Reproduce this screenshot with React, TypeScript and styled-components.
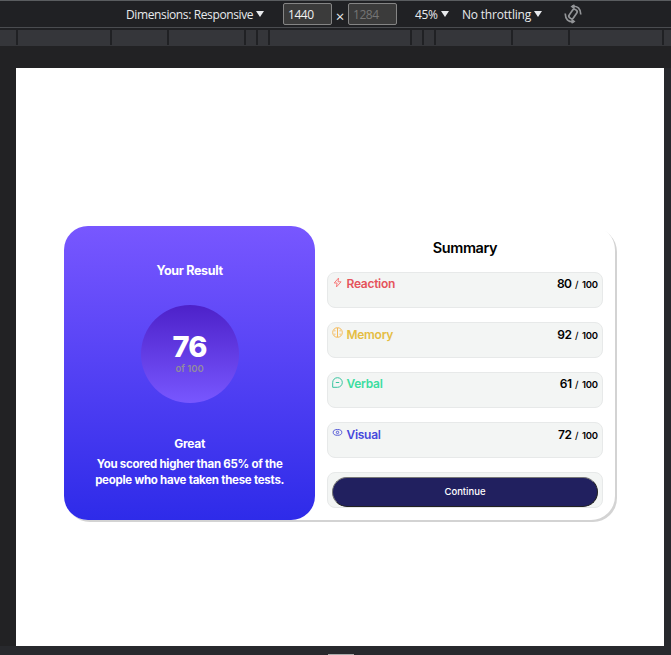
import React from "react";
import styled, { createGlobalStyle } from "styled-components";

const GlobalStyle = createGlobalStyle`
  * { box-sizing: border-box; }
  body { margin: 0; background: #202124; overflow: hidden; }
  h1, h2, h3, p { margin: 0; }
`;

const Window = styled.div`
  width: 671px;
  height: 655px;
  display: flex;
  flex-direction: column;
  background: #202124;
  font-family: Inter, "Liberation Sans", sans-serif;
`;

const Toolbar = styled.header`
  height: 28px;
  flex: none;
  display: flex;
  align-items: center;
  border-top: 1px solid #5a5d60;
  border-bottom: 1px solid #4a4c50;
  padding-left: 126px;
  color: #e8eaed;
  font: 12px/16px "Open Sans", "Noto Sans", sans-serif;
  white-space: nowrap;
`;

const Menu = styled.div<{ $width: number; $before?: number; $after?: number; $spacing: number }>`
  width: ${(p) => p.$width}px;
  margin-left: ${(p) => p.$before ?? 0}px;
  margin-right: ${(p) => p.$after ?? 0}px;
  letter-spacing: ${(p) => p.$spacing}px;
  display: flex;
  justify-content: space-between;
  align-items: center;
  padding-top: 2px;
  flex: none;
`;

const Arrow = styled.span`
  border: 4px solid transparent;
  border-top: 6px solid #e8eaed;
  border-bottom: 0;
  margin-bottom: 3px;
`;

const SizeInput = styled.input`
  width: 49px;
  height: 22px;
  padding: 1px 3px 0 4px;
  border: 1px solid #858585;
  border-radius: 2px;
  background: #3b3b3b;
  color: #f1f1f1;
  font: 12px "Open Sans", "Noto Sans", sans-serif;
  letter-spacing: -0.45px;
  &:disabled { color: #757575; }
`;

const Times = styled.span`
  width: 16px;
  padding: 4px 0 0;
  text-align: center;
  font-size: 15px;
`;

const RotateIcon = styled.svg`
  width: 20px;
  height: 20px;
  margin-left: 21px;
`;

const Ruler = styled.div`
  height: 16px;
  flex: none;
  margin-top: 2px;
  display: flex;
  gap: 2px;
  border-bottom: 1px solid #35363a;
`;

const Segment = styled.span<{ $width: number }>`
  width: ${(p) => p.$width}px;
  flex: none;
  background: #35363a;
`;

const Stage = styled.div`
  flex: 1;
  display: grid;
  grid-template-columns: 16px 648px 7px;
  grid-template-rows: 22px 578px 9px;
  background: #222224;
`;

const Page = styled.main`
  grid-area: 2 / 2;
  background: #fff;
  padding: 157.6px 0 0 48.3px;
`;

const Gutter = styled.div`
  grid-area: 2 / 3;
  background: #27282c;
`;

const Footer = styled.div`
  grid-area: 3 / 1 / 4 / 4;
  background: #28292d;
  display: flex;
  align-items: flex-end;
  padding-left: 328px;
`;

const Handle = styled.span`
  width: 26px;
  height: 1px;
  background: #a9a9a9;
`;

const Card = styled.section`
  width: 550.7px;
  height: 294px;
  display: flex;
  border-radius: 24px;
  background: #fff;
  box-shadow: 2px 2px 0 #d3d3d3;
`;

const Result = styled.section`
  width: 250.7px;
  flex: none;
  display: flex;
  flex-direction: column;
  align-items: center;
  padding-top: 37.4px;
  border-radius: 24px;
  background: linear-gradient(#7857ff, #2e2be9);
  color: #fff;
  text-align: center;
`;

const ResultTitle = styled.h1`
  font-size: 12.5px;
  line-height: 16px;
  font-weight: 700;
  letter-spacing: -0.3px;
`;

const Score = styled.div`
  width: 98px;
  height: 98px;
  margin: 26px 0 32px;
  display: flex;
  flex-direction: column;
  align-items: center;
  padding-top: 25px;
  border-radius: 50%;
  background: linear-gradient(#4d21c9, #7857ff);
`;

const ScoreValue = styled.strong`
  font-size: 29px;
  line-height: 34px;
  font-weight: 800;
  letter-spacing: -0.8px;
`;

const ScoreTotal = styled.span`
  color: #928b9e;
  font-size: 9.5px;
  line-height: 10px;
  font-weight: 600;
`;

const Grade = styled.h2`
  margin-top: 1px;
  font-size: 12px;
  line-height: 16px;
  letter-spacing: -0.3px;
`;

const Message = styled.p`
  margin-top: 4px;
  font-size: 11.5px;
  line-height: 16px;
  font-weight: 700;
  letter-spacing: -0.26px;
  white-space: nowrap;
`;

const Summary = styled.section`
  width: 276px;
  margin-left: 12px;
`;

const SummaryTitle = styled.h2`
  height: 46px;
  padding-top: 12px;
  font-size: 14.5px;
  line-height: 20px;
  font-weight: 600;
  letter-spacing: -0.4px;
  text-align: center;
`;

const List = styled.div`
  display: flex;
  flex-direction: column;
  gap: 14px;
`;

const Row = styled.div`
  height: 36px;
  display: flex;
  align-items: flex-start;
  padding: 4px;
  border: 1px solid #e7e9e9;
  border-radius: 8px;
  background: #f3f5f4;
`;

const RowIcon = styled.svg`
  width: 11px;
  height: 11px;
  margin-right: 3.5px;
  fill: none;
  flex: none;
`;

const Name = styled.span<{ $color: string; $drop: number }>`
  flex: 1;
  display: flex;
  color: ${(p) => p.$color};
  font-size: 12px;
  line-height: 14px;
  font-weight: 600;
  letter-spacing: -0.28px;
  > span { padding-top: ${(p) => p.$drop}px; }
`;

const Points = styled.span<{ $drop: number }>`
  padding-top: ${(p) => p.$drop}px;
  display: flex;
  align-items: baseline;
  gap: 3.5px;
  font-size: 9.5px;
  line-height: 14px;
  font-weight: 600;
  letter-spacing: -0.15px;
  b { font-size: 12px; font-weight: 600; letter-spacing: -0.5px; }
  i { font-style: normal; font-weight: 500; }
`;

const ContinueButton = styled.button`
  width: 100%;
  height: 30px;
  padding: 0;
  border: 1.5px outset #777;
  border-radius: 15px;
  background: #21205f;
  color: #fff;
  font: 500 9.5px Inter, sans-serif;
  flex: none;
`;

const icons: Record<string, React.ReactNode> = {
  Reaction: <path d="M6.6 1 2.2 6h2.9l-.7 4L9.1 4.8H6z" stroke="#f87c7c" />,
  Memory: (
    <g stroke="#f5b957">
      <circle cx="5.5" cy="5.5" r="4.8" />
      <path d="M5.5 1v9" />
      <path d="M3.6 3.8H2M7.4 3.800H9M3.600 7.200H2M7.400 7.200H9" strokeWidth=".8" />
    </g>
  ),
  Verbal: (
    <g stroke="#35c49f">
      <path d="M.7 10.3V5.5a4.8 4.8 0 1 1 4.8 4.8z" />
      <path d="M3.8 5.5h3.4" />
    </g>
  ),
  Visual: (
    <g stroke="#5358d8">
      <ellipse cx="5.5" cy="5.4" rx="4.3" ry="2.9" />
      <circle cx="5.5" cy="5.4" r="1.2" />
    </g>
  ),
};

const scores = [
  { name: "Reaction", value: 80, color: "#e5535b", drop: 0 },
  { name: "Memory", value: 92, color: "#e5bd43", drop: 1 },
  { name: "Verbal", value: 61, color: "#3bdda0", drop: 0 },
  { name: "Visual", value: 72, color: "#4749dc", drop: 1 },
];

const segments = [16, 92, 55, 75, 10, 10, 140, 10, 10, 75, 55, 92, 7];

export default function App() {
  return (
    <Window>
      <GlobalStyle />
      <Toolbar>
        <Menu $width={138} $after={19} $spacing={-0.38}>Dimensions: Responsive<Arrow /></Menu>
        <SizeInput defaultValue="1440" />
        <Times>×</Times>
        <SizeInput defaultValue="1284" disabled />
        <Menu $width={34} $before={18} $after={13} $spacing={-0.4}>45%<Arrow /></Menu>
        <Menu $width={80} $spacing={-0.2}>No throttling<Arrow /></Menu>
        <RotateIcon viewBox="0 0 20 20" fill="none" stroke="#929497" strokeWidth="1.7">
          <rect x="7.5" y="5" width="5" height="10" rx="2" transform="rotate(35 10 10)" />
          <path d="M9 2.3Q17.5 1.5 17.8 10.5M11 17.7Q2.5 18.5 2.2 9.5" />
          <path d="M11.5 1 9 2.5l2.5 2M8.5 19l2.5-1.5-2.5-2" />
        </RotateIcon>
      </Toolbar>
      <Ruler>{segments.map((w, i) => <Segment key={i} $width={w} />)}</Ruler>
      <Stage>
        <Page>
          <Card>
            <Result>
              <ResultTitle>Your Result</ResultTitle>
              <Score>
                <ScoreValue>76</ScoreValue>
                <ScoreTotal>of 100</ScoreTotal>
              </Score>
              <Grade>Great</Grade>
              <Message>You scored higher than 65% of the<br />people who have taken these tests.</Message>
            </Result>
            <Summary>
              <SummaryTitle>Summary</SummaryTitle>
              <List>
                {scores.map((s) => (
                  <Row key={s.name}>
                    <Name $color={s.color} $drop={s.drop}>
                      <RowIcon viewBox="0 0 11 11">{icons[s.name]}</RowIcon>
                      <span>{s.name}</span>
                    </Name>
                    <Points $drop={s.drop}><b>{s.value}</b><i>/</i><span>100</span></Points>
                  </Row>
                ))}
                <Row><ContinueButton>Continue</ContinueButton></Row>
              </List>
            </Summary>
          </Card>
        </Page>
        <Gutter />
        <Footer><Handle /></Footer>
      </Stage>
    </Window>
  );
}
